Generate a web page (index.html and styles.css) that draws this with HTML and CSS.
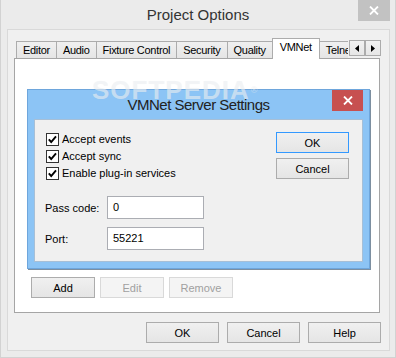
FILE: index.html
```html
<!DOCTYPE html>
<html>
<head>
<meta charset="utf-8">
<link rel="stylesheet" href="styles.css">
</head>
<body>
<div class="window">
  <div class="titlebar">
    <span></span>
    <div class="title">Project Options</div>
    <div class="win-close">
      <svg width="10" height="9" viewBox="0 0 10 9"><path d="M1 0.5 L9 8.5 M9 0.5 L1 8.5" stroke="#fff" stroke-width="1.8"/></svg>
    </div>
  </div>
  <div class="client">
    <div class="tabstrip">
      <div class="tabs">
        <div class="tab">Editor</div>
        <div class="tab">Audio</div>
        <div class="tab">Fixture Control</div>
        <div class="tab">Security</div>
        <div class="tab">Quality</div>
        <div class="tab active">VMNet</div>
        <div class="tab">Telnet</div>
      </div>
      <div class="scrollers">
        <div class="scroll-btn"><svg width="4" height="7" viewBox="0 0 4 7"><path d="M4 0 L0 3.5 L4 7 Z" fill="#000"/></svg></div>
        <div class="scroll-btn"><svg width="4" height="7" viewBox="0 0 4 7"><path d="M0 0 L4 3.5 L0 7 Z" fill="#000"/></svg></div>
      </div>
    </div>
    <div class="panel">
      <div class="list-buttons">
        <div class="btn">Add</div>
        <div class="btn disabled">Edit</div>
        <div class="btn disabled">Remove</div>
      </div>
      <div class="dialog">
        <div class="dlg-titlebar">
          <span></span>
          <div class="dlg-title">VMNet Server Settings</div>
          <div class="dlg-close">
            <svg width="10" height="9" viewBox="0 0 10 9"><path d="M1 0.5 L9 8.5 M9 0.5 L1 8.5" stroke="#fff" stroke-width="1.8"/></svg>
          </div>
        </div>
        <div class="dlg-client">
          <div class="dlg-left">
            <div class="checks">
              <div class="check-row">
                <svg class="cb" width="13" height="13" viewBox="0 0 13 13"><rect x="0.5" y="0.5" width="12" height="12" fill="#fff" stroke="#333"/><path d="M2.8 6.4 L5.2 9 L10 3.4" stroke="#000" stroke-width="1.9" fill="none"/></svg>
                <span>Accept events</span>
              </div>
              <div class="check-row">
                <svg class="cb" width="13" height="13" viewBox="0 0 13 13"><rect x="0.5" y="0.5" width="12" height="12" fill="#fff" stroke="#333"/><path d="M2.8 6.4 L5.2 9 L10 3.4" stroke="#000" stroke-width="1.9" fill="none"/></svg>
                <span>Accept sync</span>
              </div>
              <div class="check-row">
                <svg class="cb" width="13" height="13" viewBox="0 0 13 13"><rect x="0.5" y="0.5" width="12" height="12" fill="#fff" stroke="#333"/><path d="M2.8 6.4 L5.2 9 L10 3.4" stroke="#000" stroke-width="1.9" fill="none"/></svg>
                <span>Enable plug-in services</span>
              </div>
            </div>
            <div class="fields">
              <div class="field">
                <span class="label">Pass code:</span>
                <div class="input">0</div>
              </div>
              <div class="field">
                <span class="label">Port:</span>
                <div class="input">55221</div>
              </div>
            </div>
          </div>
          <div class="dlg-right">
            <div class="btn default">OK</div>
            <div class="btn">Cancel</div>
          </div>
        </div>
      </div>
      <div class="watermark">SOFTPEDIA<span class="reg">®</span></div>
    </div>
    <div class="footer">
      <div class="btn">OK</div>
      <div class="btn">Cancel</div>
      <div class="btn">Help</div>
    </div>
  </div>
</div>
</body>
</html>
```
FILE: styles.css
```css
html, body {
  margin: 0;
  padding: 0;
}
body {
  width: 396px;
  height: 358px;
  overflow: hidden;
  font-family: "Liberation Sans", Arial, sans-serif;
  font-size: 11px;
  color: #000;
}
.window {
  width: 396px;
  height: 358px;
  box-sizing: border-box;
  border: 1px solid #d2d2d2;
  border-top: 0;
  background: #ebebeb;
  display: flex;
  flex-direction: column;
}
.titlebar {
  height: 29px;
  display: grid;
  grid-template-columns: 1fr auto 1fr;
  align-items: start;
}
.title {
  font-size: 15px;
  line-height: 29px;
  color: #333;
}
.win-close {
  justify-self: end;
  margin-right: 5px;
  width: 32px;
  height: 21px;
  background: #c2c2c2;
  display: flex;
  align-items: center;
  justify-content: center;
}
.client {
  flex: 1;
  margin: 0 5px 6px 6px;
  border: 1px solid #d9d9d9;
  background: #f0f0f0;
  padding: 8px 0 0 6px;
  display: flex;
  flex-direction: column;
}
.tabstrip {
  display: flex;
  height: 21px;
  margin-bottom: -1px;
  margin-right: 8px;
  position: relative;
  z-index: 1;
}
.tabs {
  width: 333px;
  padding-left: 2px;
  display: flex;
  align-items: flex-end;
  overflow: hidden;
}
.tab {
  flex-shrink: 0;
  box-sizing: border-box;
  height: 17px;
  margin-bottom: 1px;
  margin-left: -1px;
  padding: 0 6px;
  border: 1px solid #acacac;
  border-bottom: 0;
  background: linear-gradient(#f0f0f0, #e5e5e5);
  line-height: 16px;
  letter-spacing: -0.3px;
  white-space: nowrap;
}
.tab:first-child {
  margin-left: 0;
}
.tab.active {
  height: 21px;
  margin-bottom: 0;
  padding: 0 7px;
  background: #fff;
  line-height: 17px;
  position: relative;
}
.scrollers {
  display: flex;
  margin-top: 2px;
  margin-left: 1px;
}
.scroll-btn {
  width: 16px;
  height: 16px;
  box-sizing: border-box;
  border: 1px solid #acacac;
  background: linear-gradient(#f2f2f2, #e6e6e6);
  display: flex;
  align-items: center;
  justify-content: center;
}
.panel {
  width: 366px;
  height: 255px;
  box-sizing: border-box;
  border: 1px solid #a5a5a5;
  background: #fff;
  position: relative;
  display: flex;
  flex-direction: column;
  justify-content: flex-end;
  padding: 0 0 14px 16px;
}
.list-buttons {
  display: flex;
  gap: 5px;
}
.btn {
  width: 73px;
  height: 21px;
  box-sizing: border-box;
  border: 1px solid #acacac;
  background: linear-gradient(#f0f0f0, #e5e5e5);
  display: flex;
  align-items: center;
  justify-content: center;
  white-space: nowrap;
}
.list-buttons .btn {
  width: 64px;
}
.btn.disabled {
  border-color: #d9d9d9;
  background: #f4f4f4;
  color: #a0a0a0;
}
.btn.default {
  border-color: #3399ff;
}
.footer {
  display: flex;
  justify-content: flex-end;
  gap: 8px;
  margin-top: 9px;
  padding-right: 8px;
}
.dialog {
  position: absolute;
  left: 12px;
  top: 30px;
  width: 343px;
  height: 180px;
  box-sizing: border-box;
  border: 1px solid #6ea6dc;
  background: #8cc4f5;
  box-shadow: 1px 1px 0 #7d8fa0;
  padding: 0 6px 6px 6px;
  display: flex;
  flex-direction: column;
}
.dlg-titlebar {
  height: 29px;
  display: grid;
  grid-template-columns: 1fr auto 1fr;
  align-items: start;
}
.dlg-title {
  font-size: 15px;
  line-height: 29px;
  letter-spacing: -0.5px;
  color: #222;
}
.dlg-close {
  justify-self: end;
  width: 31px;
  height: 21px;
  background: #c75050;
  display: flex;
  align-items: center;
  justify-content: center;
}
.dlg-client {
  flex: 1;
  border: 1px solid #a7bfd6;
  background: #f0f0f0;
  padding: 11px 13px 0 10px;
  display: flex;
  justify-content: space-between;
}
.checks {
  margin-left: 1px;
}
.check-row {
  height: 17px;
  display: flex;
  align-items: center;
  gap: 3px;
  line-height: 17px;
}
.cb {
  display: block;
}
.fields {
  margin-top: 14px;
  display: flex;
  flex-direction: column;
  gap: 8px;
}
.field {
  display: flex;
  align-items: center;
}
.label {
  width: 62px;
}
.input {
  width: 97px;
  height: 23px;
  box-sizing: border-box;
  border: 1px solid #abadb3;
  background: #fff;
  padding-left: 5px;
  line-height: 21px;
}
.dlg-right {
  padding-top: 1px;
  display: flex;
  flex-direction: column;
  gap: 5px;
}
.watermark {
  position: absolute;
  left: 77px;
  top: 18px;
  font-size: 26px;
  line-height: 26px;
  font-weight: bold;
  letter-spacing: 1px;
  color: rgba(240, 243, 246, 0.6);
  text-shadow: 0 0 1px rgba(0, 0, 0, 0.04);
  z-index: 2;
}
.watermark .reg {
  font-size: 9px;
  font-weight: normal;
  vertical-align: top;
  margin-left: 1px;
}
```
